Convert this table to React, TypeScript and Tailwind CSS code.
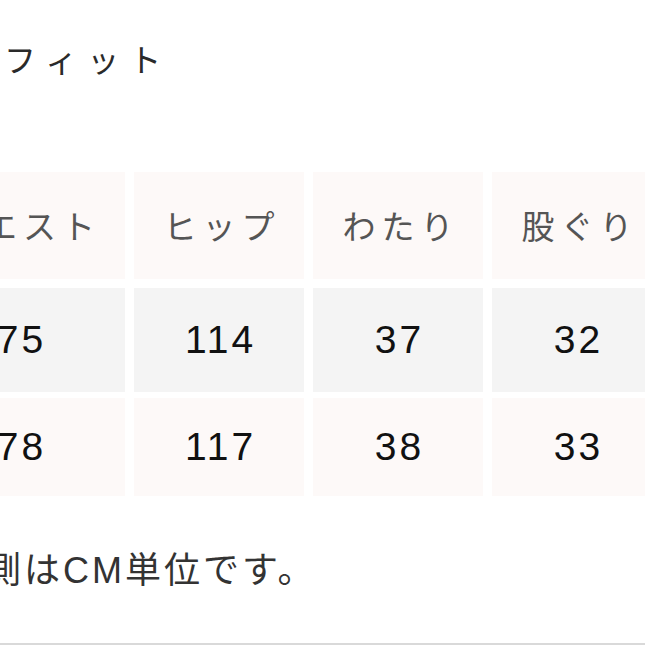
import React from 'react';

const headers = ['ウエスト', 'ヒップ', 'わたり', '股ぐり'];

const rows = [
  { values: ['75', '114', '37', '32'], cell: 'bg-[#f4f4f4]', row: 'h-[104px] mt-[9px]' },
  { values: ['78', '117', '38', '33'], cell: 'bg-[#fdf9f8]', row: 'h-[98px] mt-[6px]' },
];

const jp = { fontFamily: '"Noto Sans CJK JP", sans-serif' };
const num = { fontFamily: '"Liberation Sans", "Noto Sans CJK JP", sans-serif' };

const App: React.FC = () => {
  return (
    <div className="w-[645px] h-[645px] overflow-hidden bg-white flex flex-col" style={jp}>
      <div className="mt-[42px] pl-[4px] text-[32px] leading-[32px] tracking-[10px] text-[#2a2a2a]">
        フィット
      </div>

      <div className="mt-[98px] -ml-[85px] flex flex-col">
        <div className="h-[107px] grid grid-cols-[210px_170px_170px_170px] gap-x-[9px]">
          {headers.map((h) => (
            <div
              key={h}
              className="bg-[#fdf9f8] flex items-center justify-center text-[33px] tracking-[6px] pl-[6px] text-[#555555]"
            >
              {h}
            </div>
          ))}
        </div>
        {rows.map((r, i) => (
          <div key={i} className={`${r.row} grid grid-cols-[210px_170px_170px_170px] gap-x-[9px]`}>
            {r.values.map((v, j) => (
              <div
                key={j}
                className={`${r.cell} flex items-center justify-center text-[39px] tracking-[3px] pl-[3px] text-[#111111]`}
                style={num}
              >
                {v}
              </div>
            ))}
          </div>
        ))}
      </div>

      <div
        className="mt-[55px] -ml-[54px] text-[36px] leading-[40px] tracking-[3px] text-[#333333] whitespace-nowrap"
        style={num}
      >
        実測はCM単位です。
      </div>

      <div className="mt-auto h-[2px] bg-[#d9d9d9]" />
    </div>
  );
};

export default App;
